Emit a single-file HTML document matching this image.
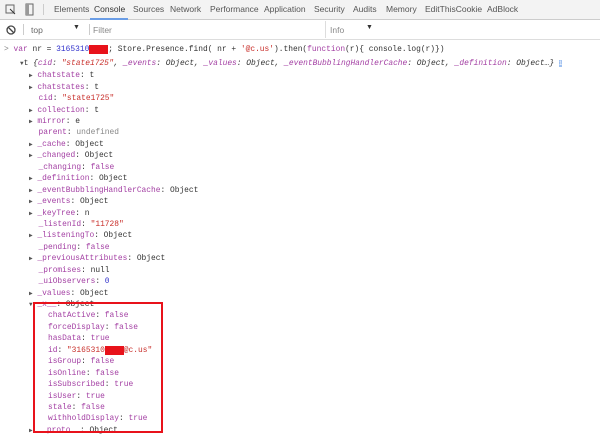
<!DOCTYPE html>
<html><head><style>
body{margin:0;width:600px;height:438px;background:#fff;overflow:hidden;position:relative;font-family:"Liberation Sans",sans-serif}
.tb{position:absolute;left:0;top:0;width:600px;height:19px;background:#f3f3f3;border-bottom:1px solid #ccc;font-size:8.5px;color:#555}
.tb span{position:absolute;top:4px}
.fb{position:absolute;left:0;top:20px;width:600px;height:19px;background:#fff;border-bottom:1px solid #ddd;font-size:8.5px;color:#666}
.mono{font-family:"Liberation Mono",monospace;font-size:7.9px}
.ln{position:absolute;left:0;white-space:pre;height:11.45px;line-height:11.45px}
.list div{white-space:pre;height:11.45px;line-height:11.45px}
.k{color:#a33fa3}.s{color:#c9302c}.n{color:#3333cc}.o{color:#333}.g{color:#888}.b{color:#a33fa3}
.ar{color:#555;font-size:6px}
</style></head><body>
<div class="tb">
<svg style="position:absolute;left:5px;top:4px" width="11" height="11"><rect x="1" y="1" width="8" height="8" fill="none" stroke="#666"/><path d="M5 5l5 5" stroke="#333"/></svg>
<svg style="position:absolute;left:24px;top:3px" width="12" height="13"><rect x="2" y="1" width="7" height="11" fill="none" stroke="#666"/><rect x="2" y="1" width="3" height="11" fill="#999"/></svg>
<div style="position:absolute;left:43px;top:4px;width:1px;height:11px;background:#ccc"></div>
<span style="left:54px">Elements</span>
<span style="left:94px;color:#333">Console</span>
<div style="position:absolute;left:90px;top:18px;width:38px;height:2px;background:#6a9de6"></div>
<span style="left:133px">Sources</span>
<span style="left:170px">Network</span>
<span style="left:210px">Performance</span>
<span style="left:264px">Application</span>
<span style="left:314px">Security</span>
<span style="left:353px">Audits</span>
<span style="left:386px">Memory</span>
<span style="left:425px">EditThisCookie</span>
<span style="left:487px">AdBlock</span>
</div>
<div class="fb">
<svg style="position:absolute;left:6px;top:5px" width="10" height="10"><circle cx="5" cy="5" r="4" fill="none" stroke="#444" stroke-width="1.3"/><path d="M2 2l6 6" stroke="#444" stroke-width="1.3"/></svg>
<div style="position:absolute;left:23px;top:4px;width:1px;height:11px;background:#ccc"></div>
<span style="position:absolute;left:31px;top:5px">top</span>
<span style="position:absolute;left:73px;top:4px;font-size:7px;color:#333">▼</span>
<div style="position:absolute;left:89px;top:4px;width:1px;height:11px;background:#ccc"></div>
<span style="position:absolute;left:93px;top:5px;color:#888">Filter</span>
<div style="position:absolute;left:325px;top:1px;width:1px;height:17px;background:#ddd"></div>
<span style="position:absolute;left:330px;top:5px;color:#888">Info</span>
<span style="position:absolute;left:366px;top:4px;font-size:7px;color:#333">▼</span>
</div>
<div class="mono">
<div class="ln" style="top:44px;left:4px"><span class="g">&gt;</span> <span class="k">var</span> <span class="o">nr = </span><span class="n">3165310</span><span style="background:#e8121b;color:#e8121b">xxxx</span><span class="o">; Store.Presence.find( nr + </span><span class="s">'@c.us'</span><span class="o">).then(</span><span class="k">function</span><span class="o">(r){ console.log(r)})</span></div>
<div class="ln" style="top:58px;left:20px"><span class="ar">▼</span><span class="o">t </span><i class="o">{<span class="k">cid</span>: <span class="s">"state1725"</span>, <span class="k">_events</span>: Object, <span class="k">_values</span>: Object, <span class="k">_eventBubblingHandlerCache</span>: Object, <span class="k">_definition</span>: Object…}</i> <span style="background:#9fc0f0;color:#fff;font-size:6px">i</span></div>
<div class="list" style="position:absolute;left:29px;top:70.3px">
<div><span class="ar">▶</span> <span class="k">chatstate</span><span class="o">: t</span></div>
<div><span class="ar">▶</span> <span class="k">chatstates</span><span class="o">: t</span></div>
<div>  <span class="k">cid</span><span class="o">: </span><span class="s">"state1725"</span></div>
<div><span class="ar">▶</span> <span class="k">collection</span><span class="o">: t</span></div>
<div><span class="ar">▶</span> <span class="k">mirror</span><span class="o">: e</span></div>
<div>  <span class="k">parent</span><span class="o">: </span><span class="g">undefined</span></div>
<div><span class="ar">▶</span> <span class="k">_cache</span><span class="o">: Object</span></div>
<div><span class="ar">▶</span> <span class="k">_changed</span><span class="o">: Object</span></div>
<div>  <span class="k">_changing</span><span class="o">: </span><span class="b">false</span></div>
<div><span class="ar">▶</span> <span class="k">_definition</span><span class="o">: Object</span></div>
<div><span class="ar">▶</span> <span class="k">_eventBubblingHandlerCache</span><span class="o">: Object</span></div>
<div><span class="ar">▶</span> <span class="k">_events</span><span class="o">: Object</span></div>
<div><span class="ar">▶</span> <span class="k">_keyTree</span><span class="o">: n</span></div>
<div>  <span class="k">_listenId</span><span class="o">: </span><span class="s">"11728"</span></div>
<div><span class="ar">▶</span> <span class="k">_listeningTo</span><span class="o">: Object</span></div>
<div>  <span class="k">_pending</span><span class="o">: </span><span class="b">false</span></div>
<div><span class="ar">▶</span> <span class="k">_previousAttributes</span><span class="o">: Object</span></div>
<div>  <span class="k">_promises</span><span class="o">: null</span></div>
<div>  <span class="k">_uiObservers</span><span class="o">: </span><span class="n">0</span></div>
<div><span class="ar">▶</span> <span class="k">_values</span><span class="o">: Object</span></div>
<div><span class="ar">▼</span> <span class="k">_x__</span><span class="o">: Object</span></div>
<div>    <span class="k">chatActive</span><span class="o">: </span><span class="b">false</span></div>
<div>    <span class="k">forceDisplay</span><span class="o">: </span><span class="b">false</span></div>
<div>    <span class="k">hasData</span><span class="o">: </span><span class="b">true</span></div>
<div>    <span class="k">id</span><span class="o">: </span><span class="s">"3165310<span style="background:#e8121b;color:#e8121b">xxxx</span>@c.us"</span></div>
<div>    <span class="k">isGroup</span><span class="o">: </span><span class="b">false</span></div>
<div>    <span class="k">isOnline</span><span class="o">: </span><span class="b">false</span></div>
<div>    <span class="k">isSubscribed</span><span class="o">: </span><span class="b">true</span></div>
<div>    <span class="k">isUser</span><span class="o">: </span><span class="b">true</span></div>
<div>    <span class="k">stale</span><span class="o">: </span><span class="b">false</span></div>
<div>    <span class="k">withholdDisplay</span><span class="o">: </span><span class="b">true</span></div>
<div><span class="ar">▶</span> <span class="k">__proto__</span><span class="o">: Object</span></div>
</div>
</div>
<div style="position:absolute;left:33px;top:302px;width:126px;height:127px;border:2px solid #e8121b"></div>
</body></html>
